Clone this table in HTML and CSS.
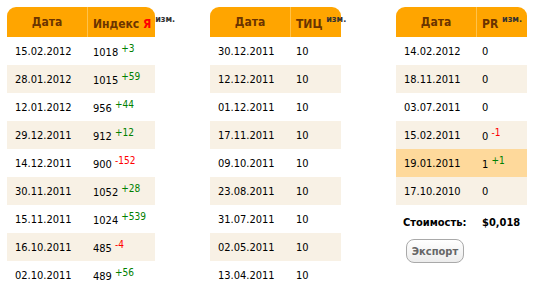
FILE: index.html
```html
<!DOCTYPE html>
<html lang="ru">
<head>
<meta charset="utf-8">
<link rel="stylesheet" href="styles.css">
</head>
<body>
<div class="page">
  <div class="block b-wide">
    <table class="stats">
      <colgroup><col class="c1"><col class="c2w"></colgroup>
      <thead><tr><th class="h-date">Дата</th><th class="h-val">Индекс <span class="ya">Я</span> <span class="chg">изм.</span></th></tr></thead>
      <tbody>
        <tr><td>15.02.2012</td><td>1018 <span class="up">+3</span></td></tr>
        <tr><td>28.01.2012</td><td>1015 <span class="up">+59</span></td></tr>
        <tr><td>12.01.2012</td><td>956 <span class="up">+44</span></td></tr>
        <tr><td>29.12.2011</td><td>912 <span class="up">+12</span></td></tr>
        <tr><td>14.12.2011</td><td>900 <span class="down">-152</span></td></tr>
        <tr><td>30.11.2011</td><td>1052 <span class="up">+28</span></td></tr>
        <tr><td>15.11.2011</td><td>1024 <span class="up">+539</span></td></tr>
        <tr><td>16.10.2011</td><td>485 <span class="down">-4</span></td></tr>
        <tr><td>02.10.2011</td><td>489 <span class="up">+56</span></td></tr>
      </tbody>
    </table>
  </div>
  <div class="block b-narrow">
    <table class="stats">
      <colgroup><col class="c1"><col class="c2n"></colgroup>
      <thead><tr><th class="h-date">Дата</th><th class="h-val">ТИЦ <span class="chg">изм.</span></th></tr></thead>
      <tbody>
        <tr><td>30.12.2011</td><td>10</td></tr>
        <tr><td>12.12.2011</td><td>10</td></tr>
        <tr><td>01.12.2011</td><td>10</td></tr>
        <tr><td>17.11.2011</td><td>10</td></tr>
        <tr><td>09.10.2011</td><td>10</td></tr>
        <tr><td>23.08.2011</td><td>10</td></tr>
        <tr><td>31.07.2011</td><td>10</td></tr>
        <tr><td>02.05.2011</td><td>10</td></tr>
        <tr><td>13.04.2011</td><td>10</td></tr>
      </tbody>
    </table>
  </div>
  <div class="block b-narrow">
    <table class="stats">
      <colgroup><col class="c1"><col class="c2n"></colgroup>
      <thead><tr><th class="h-date">Дата</th><th class="h-val">PR <span class="chg">изм.</span></th></tr></thead>
      <tbody>
        <tr><td>14.02.2012</td><td>0</td></tr>
        <tr><td>18.11.2011</td><td>0</td></tr>
        <tr><td>03.07.2011</td><td>0</td></tr>
        <tr><td>15.02.2011</td><td>0 <span class="down">-1</span></td></tr>
        <tr class="hl"><td>19.01.2011</td><td>1 <span class="up">+1</span></td></tr>
        <tr><td>17.10.2010</td><td>0</td></tr>
      </tbody>
      <tfoot>
        <tr><td>Стоимость:</td><td>$0,018</td></tr>
      </tfoot>
    </table>
    <button class="export" type="button">Экспорт</button>
  </div>
</div>
</body>
</html>
```

FILE: styles.css
```css
html, body {
  margin: 0;
  padding: 0;
  background: #ffffff;
}

body {
  font-family: "DejaVu Sans Condensed", "Liberation Sans", sans-serif;
  font-size: 11px;
  color: #000000;
}

.page {
  display: flex;
  align-items: flex-start;
  gap: 55px;
  padding: 7px 0 0 7px;
}

.block {
  display: flex;
  flex-direction: column;
  align-items: flex-start;
}

.b-wide { width: 148px; }
.b-narrow { width: 131px; }

.stats {
  border-collapse: separate;
  border-spacing: 0;
  table-layout: fixed;
  width: 100%;
}

.c1 { width: 80px; }
.c2w { width: 68px; }
.c2n { width: 51px; }

.stats th {
  height: 30px;
  padding: 0;
  background: #ffa500;
  color: #6b3400;
  font-size: 12px;
  font-weight: bold;
  white-space: nowrap;
  overflow: visible;
  vertical-align: middle;
}

.stats th.h-date {
  text-align: center;
  border-top-left-radius: 9px;
}

.stats th.h-val {
  text-align: left;
  padding-left: 5px;
  border-left: 1px solid #ffc24a;
  border-top-right-radius: 9px;
}

.ya { color: #ff0000; }

.chg {
  font-size: 9px;
  color: #333333;
  vertical-align: 6px;
  font-weight: bold;
}

.stats td {
  height: 28px;
  padding: 0;
  white-space: nowrap;
  vertical-align: middle;
}

.stats td:first-child { padding-left: 8px; }
.stats td:last-child { padding-left: 6px; }

.stats tbody tr:nth-child(even) td { background: #f8f1e5; }
.stats tbody tr.hl td { background: #fed99b; }

.up, .down {
  font-size: 10px;
  vertical-align: 4px;
}
.up { color: #008000; }
.down { color: #ff0000; }

.stats tfoot td {
  height: 34px;
  font-weight: bold;
  font-size: 11px;
}
.stats tfoot td:first-child { padding-left: 7px; }

.export {
  margin: 0 0 0 10px;
  width: 58px;
  height: 24px;
  padding: 0;
  border: 1px solid #a9a9a9;
  border-radius: 8px;
  background: linear-gradient(#ffffff, #ececec);
  color: #666666;
  font-family: inherit;
  font-size: 11px;
  font-weight: bold;
}
```
